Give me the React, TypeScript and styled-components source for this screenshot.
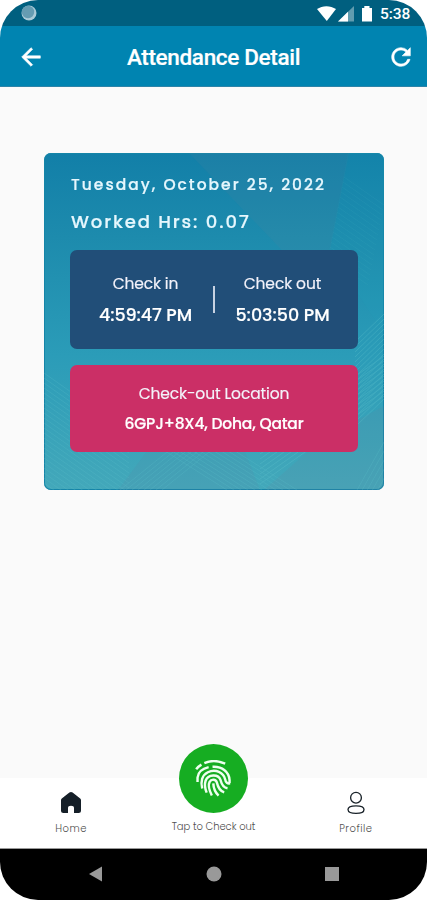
import React from "react";
import styled, { createGlobalStyle } from "styled-components";
import { MdArrowBack, MdRefresh } from "react-icons/md";

const GlobalStyle = createGlobalStyle`
  * { box-sizing: border-box; }
  html, body { margin: 0; background: #fff; }
  button { border: 0; padding: 0; background: none; color: inherit; font: inherit; }
  svg { display: block; }
`;

const Phone = styled.div`
  width: 427px;
  height: 900px;
  display: flex;
  flex-direction: column;
  overflow: hidden;
  border-radius: 38px;
  background: #fafafa;
  font-family: Poppins, Inter, "Open Sans", sans-serif;
`;

const StatusBar = styled.div`
  height: 26px;
  flex: none;
  padding: 0 16px 0 20px;
  display: flex;
  align-items: center;
  justify-content: space-between;
  background: #005f7f;
`;

const StatusIcons = styled.div`
  display: flex;
  align-items: center;
  color: #fff;
`;

const Clock = styled.span`
  margin-left: 7px;
  width: 31px;
  font: 500 15.5px/26px Roboto, sans-serif;
  letter-spacing: -0.1px;
  padding-top: 2px;
`;

const AppBar = styled.header`
  height: 61px;
  flex: none;
  padding: 2px 12px 0 17px;
  display: flex;
  align-items: center;
  justify-content: space-between;
  background: #0084b1;
  border-bottom: 1px solid #2d84a8;
  color: #fff;
`;

const BarButton = styled.button`
  path:last-child {
    stroke: currentColor;
    stroke-width: 0.5px;
  }
`;

const Title = styled.h1`
  margin: 0;
  padding: 0 5px 0 0;
  font: 500 22.5px/30px Roboto, sans-serif;
  letter-spacing: -0.33px;
  -webkit-text-stroke: 0.2px #fff;
`;

const Content = styled.main`
  flex: 1;
  padding: 66px 43px 0 44px;
`;

const Card = styled.section`
  display: grid;
  width: 340px;
  height: 337px;
  border-radius: 7px;
  overflow: hidden;
  background: linear-gradient(#127fa8, #1d8bad 25%, #2b9cb8 60%, #43a8ba);
  box-shadow: inset 0 0 0 1px #1585a8;
  & > * { grid-area: 1 / 1; }
`;

const CardBody = styled.div`
  z-index: 1;
  padding: 0 26px;
  color: #fff;
`;

const Heading = styled.div<{ $size: number; $spacing: number; $top: number }>`
  height: 24px;
  margin: ${(p) => p.$top}px 0 0 1px;
  font-size: ${(p) => p.$size}px;
  line-height: 24px;
  font-weight: 500;
  letter-spacing: ${(p) => p.$spacing}px;
  white-space: nowrap;
  color: #e6f7fd;
  -webkit-text-stroke: 0.2px currentColor;
`;

const Panel = styled.div<{ $color: string; $height: number; $top: number }>`
  width: 288px;
  height: ${(p) => p.$height}px;
  margin-top: ${(p) => p.$top}px;
  border-radius: 7px;
  background: ${(p) => p.$color};
  display: flex;
  align-items: center;
  justify-content: center;
`;

const Stack = styled.div<{ $width: number; $gap: number }>`
  width: ${(p) => p.$width}px;
  display: flex;
  flex-direction: column;
  align-items: center;
  gap: ${(p) => p.$gap}px;
  white-space: nowrap;
`;

const Label = styled.span<{ $spacing: number }>`
  font-size: 15.5px;
  line-height: 20px;
  letter-spacing: ${(p) => p.$spacing}px;
  color: #f3f2fa;
  -webkit-text-stroke: 0.15px currentColor;
`;

const Value = styled.strong<{ $size: number; $spacing: number }>`
  font-size: ${(p) => p.$size}px;
  line-height: 20px;
  font-weight: 500;
  letter-spacing: ${(p) => p.$spacing}px;
  -webkit-text-stroke: 0.2px currentColor;
`;

const Divider = styled.div`
  width: 2px;
  height: 27px;
  background: #c7d2e2;
`;

const BottomNav = styled.nav`
  height: 71px;
  flex: none;
  display: grid;
  grid-template-columns: 1fr 1fr 1fr;
  background: #fff;
  border-bottom: 1px solid #999;
`;

const NavItem = styled.button<{ $top: number }>`
  display: flex;
  flex-direction: column;
  align-items: center;
  justify-content: flex-start;
  margin-top: ${(p) => p.$top}px;
`;

const NavLabel = styled.span<{ $top: number; $spacing: number }>`
  margin-top: ${(p) => p.$top}px;
  font-size: 10px;
  line-height: 12px;
  font-weight: 300;
  letter-spacing: ${(p) => p.$spacing}px;
  color: #505050;
  white-space: nowrap;
`;

const FingerButton = styled.span`
  width: 69px;
  height: 69px;
  flex: none;
  border-radius: 50%;
  background: #16ad22;
  display: flex;
  align-items: center;
  justify-content: center;
`;

const SystemNav = styled.div`
  height: 51px;
  flex: none;
  padding-bottom: 1px;
  display: flex;
  align-items: center;
  justify-content: center;
  gap: 103px;
  background: #000;
`;

const stripes = (x: number, y: number, dx: number, dy: number, sx: number, sy: number, n: number) =>
  Array.from({ length: n }, (_, i) => `M${x + sx * i} ${y + sy * i}l${dx} ${dy}`).join("");

const CardPattern = () => (
  <svg width="340" height="337" viewBox="0 0 340 337" fill="none">
    <path d="M145 0H305L286 98 252 112Z" fill="#5c829e" opacity=".13" />
    <path d="M304 0H340V180L285 98Z" fill="#22a8bd" opacity=".12" />
    <path d="M74 337L112 286H196L216 337Z" fill="#667f9f" opacity=".12" />
    <path d="M220 337L278 286 340 253V337Z" fill="#727d96" opacity=".12" />
    <g stroke="#62c5ce" strokeWidth=".7" opacity=".32">
      <path d={stripes(0, 220, 85, 60, 0, 5, 24)} />
      <path d={stripes(76, 337, 52, -42, 6, 0, 8)} />
      <path d={stripes(110, 291, 73, 46, 7, 0, 11)} />
      <path d={stripes(216, 331, 124, -88, 0, -5, 9)} strokeWidth="1" />
      <path d={stripes(313, 337, 27, -48, 4, 2, 7)} />
      <path d={stripes(300, 24, 40, 28, -1, 5, 17)} opacity=".4" />
      <path d={stripes(311, 274, 29, -28, 0, -5, 18)} strokeWidth="1" />
    </g>
  </svg>
);

const Fingerprint = () => (
  <svg width="37" height="37" viewBox="0 0 38 38" fill="none" stroke="#effff0" strokeWidth="2.5">
    <path d="M1.2 9.5Q3.2 6.8 6.6 4.8" />
    <path d="M9.6 3.2C15.5 .6 24 .6 31 3.8" />
    <path d="M2.6 22.5V18C3.2 12.7 7.5 8.8 14 7.3" />
    <path d="M18 7C28 6.4 35 12.5 35.5 20.5V24" />
    <path d="M7.4 29.3C5.5 22.4 7.2 15.4 13.2 12.6C21.2 8.8 29.5 12.8 31 20C31.4 23.3 33.5 24.5 36 24" />
    <path d="M12 33.5C10.4 29.7 9.5 25.3 10.9 21.3C13.4 14.4 24 14 26.2 20.5C27.4 25.2 29 28.4 33.4 29" />
    <path d="M17.3 36.5C14.4 30.7 13.3 25.7 15 22.5C16.8 19.2 21.4 19.5 22.4 23C23.6 28 25.7 32 30 33.3" />
    <path d="M18.8 24C19 29 20.5 33 24.2 36.5" />
  </svg>
);

export default function App() {
  return (
    <>
      <GlobalStyle />
      <Phone>
        <StatusBar>
          <svg width="18" height="18" viewBox="0 0 18 18">
            <circle cx="9" cy="9" r="7.5" fill="#a9cad7" />
            <circle cx="8" cy="8" r="6.2" fill="#659cb2" />
          </svg>
          <StatusIcons>
            <svg width="56" height="20" viewBox="0 0 56 20" fill="#fff">
              <path d="M0 6.1C5.4 2.2 13.4 2.2 19 6.1L9.8 18Z" />
              <path d="M37 3V18.5H21Z" opacity=".38" />
              <path d="M31 8.8V18.5H21Z" />
              <path d="M45 5h2.3V3h5.2v2H55V18.5H45Z" />
            </svg>
            <Clock>5:38</Clock>
          </StatusIcons>
        </StatusBar>
        <AppBar>
          <BarButton aria-label="Back"><MdArrowBack size={28} /></BarButton>
          <Title>Attendance Detail</Title>
          <BarButton aria-label="Refresh"><MdRefresh size={28} /></BarButton>
        </AppBar>
        <Content>
          <Card>
            <CardPattern />
            <CardBody>
              <Heading $size={15.5} $spacing={2.02} $top={20}>Tuesday, October 25, 2022</Heading>
              <Heading $size={18} $spacing={1.85} $top={13}>Worked Hrs: 0.07</Heading>
              <Panel $color="#214e78" $height={99} $top={16}>
                <Stack $width={135} $gap={11}>
                  <Label $spacing={-0.15}>Check in</Label>
                  <Value $size={17.5} $spacing={-0.05}>4:59:47 PM</Value>
                </Stack>
                <Divider />
                <Stack $width={135} $gap={11}>
                  <Label $spacing={-0.1}>Check out</Label>
                  <Value $size={17.5} $spacing={0}>5:03:50 PM</Value>
                </Stack>
              </Panel>
              <Panel $color="#cb2f66" $height={87} $top={16}>
                <Stack $width={260} $gap={10}>
                  <Label $spacing={-0.12}>Check-out Location</Label>
                  <Value $size={15.5} $spacing={-0.17}>6GPJ+8X4, Doha, Qatar</Value>
                </Stack>
              </Panel>
            </CardBody>
          </Card>
        </Content>
        <BottomNav>
          <NavItem $top={13}>
            <svg width="22" height="23" viewBox="0 0 22 23">
              <path d="M1.8 7.5 9.4 1.5Q11 .3 12.6 1.5L20.2 7.5Q21 8.1 21 9.2V19.5Q21 22 18.5 22H14V17Q14 14.8 11 14.8T8 17V22H3.5Q1 22 1 19.5V9.2Q1 8.1 1.8 7.5Z" fill="#151f28" />
            </svg>
            <NavLabel $top={9} $spacing={0.6}>Home</NavLabel>
          </NavItem>
          <NavItem $top={-34}>
            <FingerButton><Fingerprint /></FingerButton>
            <NavLabel $top={8} $spacing={-0.05}>Tap to Check out</NavLabel>
          </NavItem>
          <NavItem $top={13}>
            <svg width="20" height="24" viewBox="0 0 20 24" fill="none" stroke="#1b242b" strokeWidth="1.35">
              <circle cx="10" cy="6.7" r="5.4" />
              <path d="M2 18.5C2 16 5 14.9 10 14.9S18 16 18 18.5 15 22.4 10 22.4 2 21 2 18.5Z" />
            </svg>
            <NavLabel $top={8} $spacing={0.5}>Profile</NavLabel>
          </NavItem>
        </BottomNav>
        <SystemNav>
          <svg width="14" height="16" viewBox="0 0 14 16"><path d="M0 8 13 .5V15.5Z" fill="#999" /></svg>
          <svg width="16" height="16" viewBox="0 0 16 16"><circle cx="8" cy="8" r="7.5" fill="#999" /></svg>
          <svg width="14" height="14" viewBox="0 0 14 14"><path d="M0 0H14V14H0Z" fill="#999" /></svg>
        </SystemNav>
      </Phone>
    </>
  );
}
